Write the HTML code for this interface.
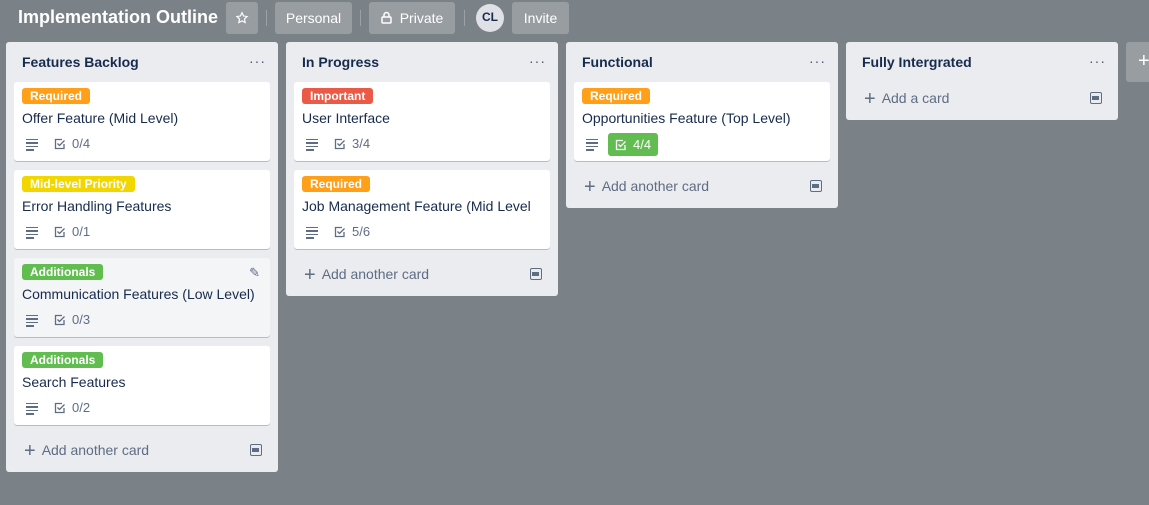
<!DOCTYPE html>
<html><head><meta charset="utf-8"><style>
*{box-sizing:border-box;margin:0;padding:0}
body{width:1149px;height:505px;background:#7b8287;font-family:"Liberation Sans",sans-serif;position:relative;overflow:hidden;color:#172b4d}
.a{position:absolute}
.hb{position:absolute;top:2px;height:32px;background:rgba(255,255,255,.22);border-radius:3px;color:#fff;font-size:14px;line-height:32px;text-align:center}
.sep{position:absolute;top:10px;width:1px;height:16px;background:rgba(255,255,255,.25)}
.list{position:absolute;top:42px;width:272px;background:#ebecf0;border-radius:3px}
.lt{position:absolute;left:16px;top:12px;font-weight:bold;font-size:14px}
.dots{position:absolute;right:12px;top:11px;font-size:14px;color:#42526e;letter-spacing:1px}
.card{position:absolute;left:8px;width:256px;height:79px;background:#fff;border-radius:3px;box-shadow:0 1px 0 #b7bcc6}
.lab{position:absolute;left:8px;top:6px;height:16px;padding:0 8px;border-radius:3px;color:#fff;font-size:12px;font-weight:bold;line-height:16px}
.ct{position:absolute;left:8px;top:28px;font-size:14px}
.desc{position:absolute;left:12px;top:57px;width:12px}
.desc i{display:block;height:1.3px;background:#5e6c84;margin-bottom:2.2px}
.desc i:last-child{width:8px}
.chk{position:absolute;left:40px;top:54px;font-size:13px;color:#5e6c84;line-height:16px}
.chk svg{vertical-align:-2px;margin-right:6px}
.add{position:absolute;left:18px;font-size:14px;color:#5e6c84}
.add b{font-weight:normal;font-size:20px;vertical-align:-2px;margin-right:6px}
.tpl{position:absolute;right:16px;width:12px;height:12px;border:1.5px solid #5e6c84;border-radius:2px}
.tpl:after{content:"";position:absolute;left:1px;top:3px;width:7px;height:4px;background:#5e6c84}
</style></head><body>
<div class="a" style="left:18px;top:7px;font-size:18px;font-weight:bold;color:#fff">Implementation Outline</div>
<div class="hb" style="left:226px;width:32px"><svg width="14" height="14" viewBox="0 0 24 24" style="vertical-align:-2px"><path d="M12 3l2.7 5.6 6.1.8-4.5 4.3 1.1 6.1L12 16.9 6.6 19.8l1.1-6.1L3.2 9.4l6.1-.8z" fill="none" stroke="#fff" stroke-width="2"/></svg></div>
<div class="sep" style="left:266px"></div>
<div class="hb" style="left:275px;width:77px">Personal</div>
<div class="sep" style="left:360px"></div>
<div class="hb" style="left:369px;width:86px"><svg width="11" height="13" viewBox="0 0 11 13" style="vertical-align:-1px;margin-right:8px"><rect x="1" y="6" width="9" height="6" rx="1" fill="none" stroke="#fff" stroke-width="1.5"/><path d="M3 6V4a2.5 2.5 0 015 0v2" fill="none" stroke="#fff" stroke-width="1.5"/></svg>Private</div>
<div class="sep" style="left:464px"></div>
<div class="a" style="left:476px;top:4px;width:28px;height:28px;border-radius:50%;background:#dfe1e6;font-size:12px;font-weight:bold;text-align:center;line-height:27px">CL</div>
<div class="hb" style="left:512px;width:57px">Invite</div>

<div class="list" style="left:6px;height:430px">
<div class="lt">Features Backlog</div><div class="dots">···</div>
<div class="card" style="top:40px"><div class="lab" style="background:#ff9f1a">Required</div><div class="ct">Offer Feature (Mid Level)</div><div class="desc"><i></i><i></i><i></i><i></i></div><div class="chk"><svg width="12" height="12" viewBox="0 0 12 12"><path d="M10 6v4.5H1.5v-9H8M3.5 5.5l2 2 5-5" fill="none" stroke="#5e6c84" stroke-width="1.3"/></svg>0/4</div></div>
<div class="card" style="top:128px"><div class="lab" style="background:#f2d600">Mid-level Priority</div><div class="ct">Error Handling Features</div><div class="desc"><i></i><i></i><i></i><i></i></div><div class="chk"><svg width="12" height="12" viewBox="0 0 12 12"><path d="M10 6v4.5H1.5v-9H8M3.5 5.5l2 2 5-5" fill="none" stroke="#5e6c84" stroke-width="1.3"/></svg>0/1</div></div>
<div class="card" style="top:216px;background:#f4f5f7"><div class="lab" style="background:#61bd4f">Additionals</div><div class="a" style="right:10px;top:7px;font-size:13px;color:#5e6c84">✎</div><div class="ct">Communication Features (Low Level)</div><div class="desc"><i></i><i></i><i></i><i></i></div><div class="chk"><svg width="12" height="12" viewBox="0 0 12 12"><path d="M10 6v4.5H1.5v-9H8M3.5 5.5l2 2 5-5" fill="none" stroke="#5e6c84" stroke-width="1.3"/></svg>0/3</div></div>
<div class="card" style="top:304px"><div class="lab" style="background:#61bd4f">Additionals</div><div class="ct">Search Features</div><div class="desc"><i></i><i></i><i></i><i></i></div><div class="chk"><svg width="12" height="12" viewBox="0 0 12 12"><path d="M10 6v4.5H1.5v-9H8M3.5 5.5l2 2 5-5" fill="none" stroke="#5e6c84" stroke-width="1.3"/></svg>0/2</div></div>
<div class="add" style="top:398px"><b>+</b>Add another card</div><div class="tpl" style="top:402px"></div>
</div>

<div class="list" style="left:286px;height:254px">
<div class="lt">In Progress</div><div class="dots">···</div>
<div class="card" style="top:40px"><div class="lab" style="background:#eb5a46">Important</div><div class="ct">User Interface</div><div class="desc"><i></i><i></i><i></i><i></i></div><div class="chk"><svg width="12" height="12" viewBox="0 0 12 12"><path d="M10 6v4.5H1.5v-9H8M3.5 5.5l2 2 5-5" fill="none" stroke="#5e6c84" stroke-width="1.3"/></svg>3/4</div></div>
<div class="card" style="top:128px"><div class="lab" style="background:#ff9f1a">Required</div><div class="ct">Job Management Feature (Mid Level</div><div class="desc"><i></i><i></i><i></i><i></i></div><div class="chk"><svg width="12" height="12" viewBox="0 0 12 12"><path d="M10 6v4.5H1.5v-9H8M3.5 5.5l2 2 5-5" fill="none" stroke="#5e6c84" stroke-width="1.3"/></svg>5/6</div></div>
<div class="add" style="top:222px"><b>+</b>Add another card</div><div class="tpl" style="top:226px"></div>
</div>

<div class="list" style="left:566px;height:166px">
<div class="lt">Functional</div><div class="dots">···</div>
<div class="card" style="top:40px"><div class="lab" style="background:#ff9f1a">Required</div><div class="ct">Opportunities Feature (Top Level)</div><div class="desc"><i></i><i></i><i></i><i></i></div><div class="chk" style="left:34px;top:51px;background:#61bd4f;color:#fff;border-radius:3px;padding:2px 7px 2px 7px;height:23px;line-height:19px"><svg width="12" height="12" viewBox="0 0 12 12"><path d="M10 6v4.5H1.5v-9H8M3.5 5.5l2 2 5-5" fill="none" stroke="#fff" stroke-width="1.3"/></svg>4/4</div></div>
<div class="add" style="top:134px"><b>+</b>Add another card</div><div class="tpl" style="top:138px"></div>
</div>

<div class="list" style="left:846px;height:78px">
<div class="lt">Fully Intergrated</div><div class="dots">···</div>
<div class="add" style="top:46px"><b>+</b>Add a card</div><div class="tpl" style="top:50px"></div>
</div>
<div class="a" style="left:1126px;top:42px;width:40px;height:40px;background:rgba(255,255,255,.22);border-radius:3px;color:#fff;font-size:20px;line-height:38px;padding-left:12px">+</div>
</body></html>
